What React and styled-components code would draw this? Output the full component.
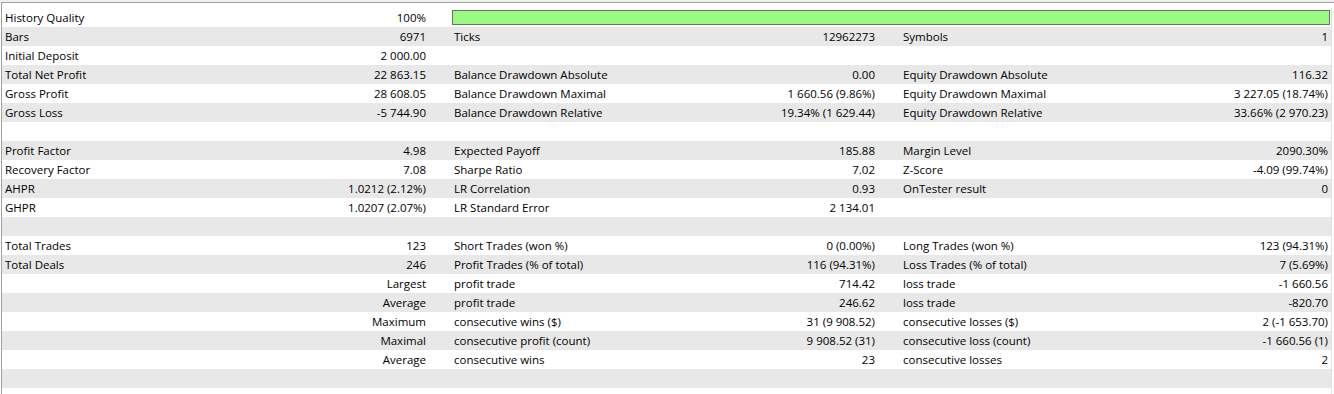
import styled, { createGlobalStyle } from "styled-components";

const GlobalStyle = createGlobalStyle`
    body {
        margin: 0;
        background: #fff;
        font-family: "Segoe UI", "Open Sans", "Liberation Sans", sans-serif;
    }
`

const Window = styled.div`
    width: 1334px;
    height: 394px;
    overflow: hidden;
    background: #fff;
    border-top: 2px solid #f0f0f0;
    box-sizing: border-box;
`

const Panel = styled.div`
    border-top: 1px solid #a0a0a0;
    border-left: 1px solid #a0a0a0;
    margin-left: 1px;
    padding: 5px 0 0 0;
    height: 100%;
    display: flex;
`

const Table = styled.div`
    width: 1329px;
    border-right: 1px solid #e2e2e2;
`

const Row = styled.div`
    height: 19px;
    display: flex;
    align-items: center;
    background: ${p => p.$shade ? '#e8e8e8' : '#fff'};
    font-size: 11.5px;
    color: #000;
`

const Cell = styled.div`
    width: ${p => p.$last ? 'auto' : '449px'};
    flex: ${p => p.$last ? '1' : 'none'};
    display: flex;
    justify-content: space-between;
    align-items: center;
    padding: 0 ${p => p.$last ? '3px' : '25px'} 0 3px;
    box-sizing: border-box;
    white-space: nowrap;
`

const BarCell = styled.div`
    flex: 1;
    height: 19px;
    padding: 2px 1px 2px 1px;
    box-sizing: border-box;
`

const Bar = styled.div`
    height: 15px;
    background: #98fa80;
    border: 1px solid #6f6f6f;
    box-sizing: border-box;
`

const rows = [
    [['History Quality', '100%'], 'bar'],
    [['Bars', '6971'], ['Ticks', '12962273'], ['Symbols', '1']],
    [['Initial Deposit', '2 000.00'], ['', ''], ['', '']],
    [['Total Net Profit', '22 863.15'], ['Balance Drawdown Absolute', '0.00'], ['Equity Drawdown Absolute', '116.32']],
    [['Gross Profit', '28 608.05'], ['Balance Drawdown Maximal', '1 660.56 (9.86%)'], ['Equity Drawdown Maximal', '3 227.05 (18.74%)']],
    [['Gross Loss', '-5 744.90'], ['Balance Drawdown Relative', '19.34% (1 629.44)'], ['Equity Drawdown Relative', '33.66% (2 970.23)']],
    [['', ''], ['', ''], ['', '']],
    [['Profit Factor', '4.98'], ['Expected Payoff', '185.88'], ['Margin Level', '2090.30%']],
    [['Recovery Factor', '7.08'], ['Sharpe Ratio', '7.02'], ['Z-Score', '-4.09 (99.74%)']],
    [['AHPR', '1.0212 (2.12%)'], ['LR Correlation', '0.93'], ['OnTester result', '0']],
    [['GHPR', '1.0207 (2.07%)'], ['LR Standard Error', '2 134.01'], ['', '']],
    [['', ''], ['', ''], ['', '']],
    [['Total Trades', '123'], ['Short Trades (won %)', '0 (0.00%)'], ['Long Trades (won %)', '123 (94.31%)']],
    [['Total Deals', '246'], ['Profit Trades (% of total)', '116 (94.31%)'], ['Loss Trades (% of total)', '7 (5.69%)']],
    [['', 'Largest'], ['profit trade', '714.42'], ['loss trade', '-1 660.56']],
    [['', 'Average'], ['profit trade', '246.62'], ['loss trade', '-820.70']],
    [['', 'Maximum'], ['consecutive wins ($)', '31 (9 908.52)'], ['consecutive losses ($)', '2 (-1 653.70)']],
    [['', 'Maximal'], ['consecutive profit (count)', '9 908.52 (31)'], ['consecutive loss (count)', '-1 660.56 (1)']],
    [['', 'Average'], ['consecutive wins', '23'], ['consecutive losses', '2']],
    [['', ''], ['', ''], ['', '']],
]

const App = () => {
    return (
        <Window>
            <GlobalStyle />
            <Panel>
                <Table>
                    {rows.map((r, i) => (
                        <Row key={i} $shade={i % 2 === 1}>
                            <Cell>
                                <span>{r[0][0]}</span>
                                <span>{r[0][1]}</span>
                            </Cell>
                            {r[1] === 'bar' ? (
                                <BarCell><Bar /></BarCell>
                            ) : (
                                <>
                                    <Cell>
                                        <span>{r[1][0]}</span>
                                        <span>{r[1][1]}</span>
                                    </Cell>
                                    <Cell $last>
                                        <span>{r[2][0]}</span>
                                        <span>{r[2][1]}</span>
                                    </Cell>
                                </>
                            )}
                        </Row>
                    ))}
                </Table>
            </Panel>
        </Window>
    )
}

export default App;
